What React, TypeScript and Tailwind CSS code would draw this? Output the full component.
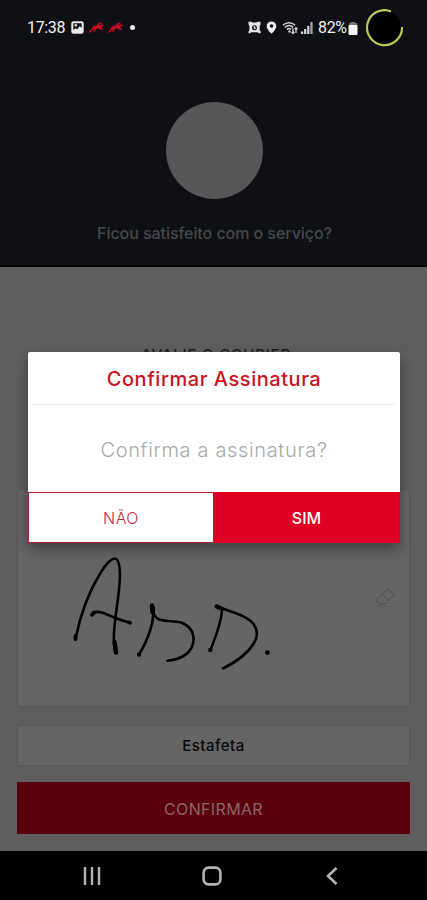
import type { ReactNode } from 'react'

function CourierIcon() {
  return (
    <svg width="15" height="12" viewBox="0 0 15 12" fill="none" stroke="#cb0a20" strokeLinecap="round" strokeLinejoin="round">
      <path d="M4.500 6.200L9 4.600l2 .8" strokeWidth="3.200" />
      <path d="M4.500 6L2.800 8 .9 9.900M6.500 6.500L5.200 9.200M10.500 6l2.600 1.400" strokeWidth="1.600" />
      <path d="M8.500 4l1.500-2.200 1.800-.5M11.500 3.600l2.300-.2" strokeWidth="1.600" />
    </svg>
  )
}

function StatusBar() {
  return (
    <div className="flex h-[55px] items-center justify-between pr-[23px] pl-[27px] text-[#f2f2f2]">
      <div className="flex items-center">
        <span className="w-[38px] font-[Roboto] text-[16px] tracking-[-0.35px] whitespace-nowrap">17:38</span>
        <svg className="ml-[6px]" width="13" height="13" viewBox="0 0 13 13">
          <rect x=".3" y=".3" width="12.400" height="12.400" rx="2.200" fill="#e9e9e9" />
          <path d="M2.300 2.300h8.400v4.500L8.600 5.200 6.200 8.400 4.700 7.300 2.300 9z" fill="#14161a" />
          <circle cx="4.800" cy="4.300" r="1.200" fill="#e9e9e9" />
          <path d="M2.500 10.200l2.200-1.700 1.500 1.200 2.400-3 2 1.800v2z" fill="#e9e9e9" />
        </svg>
        <span className="ml-[5px]"><CourierIcon /></span>
        <span className="ml-[4px]"><CourierIcon /></span>
        <span className="ml-[7px] size-[5px] rounded-full bg-[#ededed]" />
      </div>

      <div className="flex items-center">
        <svg width="13" height="13" viewBox="0 0 13 13">
          <path d="M.5.8h3l1 .8h4l1-.8h3v3l-.8 1v4.400l1 1.200v1.800h-1.900l-1-.9H3.200l-1 .9H.5v-1.800l.9-1.200V4.800l-.9-1z" fill="#e4e4e4" />
          <circle cx="6.500" cy="6.700" r="2.500" fill="#0f1115" />
          <path d="M6.300 4.900v2.300h1.900" fill="none" stroke="#e4e4e4" strokeWidth="1.200" />
        </svg>
        <svg className="ml-[5px]" width="11" height="13" viewBox="0 0 11 13">
          <path d="M5.500.4A4.800 4.800 0 0 0 .7 5.200C.7 8.500 5.500 12.600 5.500 12.600s4.800-4.100 4.800-7.400A4.800 4.800 0 0 0 5.500.4z" fill="#efefef" />
          <circle cx="5.500" cy="5" r="1.800" fill="#0e1014" />
        </svg>
        <svg className="ml-[5px]" width="17" height="14" viewBox="0 0 17 14" fill="none" stroke="#cfcfcf">
          <path d="M.8 4.200C4.500.8 9.500.8 13.200 4.200M2.800 6.400C5.400 4 8.600 4 11.200 6.400M4.900 8.400c1.200-1.100 3-1.100 4.200 0" strokeWidth="1.500" />
          <path d="M6.600 9.600l1.700 1.800" strokeWidth="2" />
          <path d="M11 7.200v5.200M9.600 11l1.400 1.500 1.300-1.500M14 12V6.800M12.800 8.200L14 6.700l1.500 1.500" strokeWidth="1.400" />
        </svg>
        <svg className="ml-[2px]" width="12" height="12" viewBox="0 0 12 12" fill="#d9d9d9">
          <path d="M0 9.600h2.200V12H0zM3.100 7h2.200v5H3.100zM6.200 4h2.200v8H6.200z" />
          <path d="M9.400 0h2.200v12H9.400z" fill="#a9a9a9" />
        </svg>
        <span className="ml-[5px] w-[29px] font-[Roboto] text-[16px] tracking-[-0.35px] whitespace-nowrap">82%</span>
        <svg className="mt-px ml-px" width="10" height="13" viewBox="0 0 10 13">
          <path d="M3 0h4v1H3zM1 1h8v3H1z" fill="#777" />
          <rect x=".5" y="3" width="9" height="10" rx="1" fill="#f5f5f5" />
        </svg>
        {/* camera cutout with the charge ring */}
        <svg className="ml-[8px]" width="38" height="38" viewBox="0 0 38 38">
          <circle cx="18.500" cy="19" r="17" fill="#000" />
          <path d="M25 2.400A17.500 17.500 0 1 0 36 18" fill="none" stroke="#b9c85a" strokeWidth="2.200" />
        </svg>
      </div>
    </div>
  )
}

function EraserIcon() {
  return (
    <svg width="22" height="22" viewBox="0 0 22 22" fill="none" stroke="#4d5150" strokeWidth="1">
      <path d="M2.500 12.500L14 2l6.500 6L10 17.300H5.800L2.500 14zM8.500 7l6 6" />
      <path d="M1 19.500h19" stroke="#595c5b" />
    </svg>
  )
}

function Signature() {
  return (
    <svg
      className="absolute top-[65px] left-[55px]"
      width="205"
      height="115"
      viewBox="73 555 205 115"
      fill="none"
      stroke="#020202"
      strokeWidth="2.600"
      strokeLinecap="round"
      strokeLinejoin="round"
    >
      <path d="M75.500 639C80 616 88 593 101 572C106 564 112 558 115 558.500C119 559 120 568 120 577C119 598 115 615 114 632C113.500 643 114 646 116 653" />
      <path d="M114.500 642L116 652.500" strokeWidth="4.500" />
      <path d="M75.500 636v3" strokeWidth="3.800" />
      <path d="M92 614.500C94 611 98 611.500 102 612.500C109 615 115 619 130 622.800" />
      <path d="M92 614.800L94 612.500M129 622.500l1 .3" strokeWidth="3.800" />
      <path d="M152.500 605.500C152 612 154 616 158 619C165 622 174 620.500 181 622.500C190 626 194 633 193.500 641C192 653 182 659 167.500 660.800" />
      <path d="M153.500 607C154 622 149 638 139 654.500" />
      <path d="M152 605.500L152.500 612" strokeWidth="4.500" />
      <path d="M217 606.500C231 612 246 615 253.500 624C258 630 257.500 637 254 643C247 655 236 662 223 668.500" />
      <path d="M222 610C221 625 215 638 210.500 650" />
      <path d="M216.800 606.500L220 608M210.300 650h.1M139 654.500h.1M267.300 652.500h.4" strokeWidth="4.400" />
    </svg>
  )
}

function Panel({ className, children }: { className: string; children: ReactNode }) {
  return <div className={`mx-[18px] bg-[#656565] shadow-[0_0_2px_1px_rgba(0,0,0,0.05)] ${className}`}>{children}</div>
}

function ConfirmDialog() {
  return (
    <div className="absolute top-[352px] left-[28px] flex h-[191px] w-[372px] flex-col rounded-t-[2px] bg-white shadow-[0_6px_14px_rgba(0,0,0,0.38)]">
      <h2 className="mx-1 flex h-[53px] items-center justify-center border-b border-[#eeeeee] pt-px text-[20px] font-medium tracking-[0.55px] text-[#cb1322]">
        Confirmar Assinatura
      </h2>
      <p className="flex h-[87px] items-center justify-center pt-[2px] text-[20px] font-light tracking-[0.65px] text-[#a9a9a9]">
        Confirma a assinatura?
      </p>
      <div className="flex h-[51px]">
        <button className="w-[185px] border border-r-0 border-[#b51d31] text-[16px] font-light tracking-[0.4px] text-[#c4293d]">NÃO</button>
        <button className="w-[187px] bg-[#df0024] text-[16px] font-medium text-white">SIM</button>
      </div>
    </div>
  )
}

function NavBar() {
  return (
    <nav className="flex h-[49px] items-center bg-black text-[#b5b5b5]">
      <svg className="ml-[83px]" width="18" height="18" viewBox="0 0 18 18" fill="none" stroke="currentColor" strokeWidth="2.400">
        <path d="M2 0v18M9 0v18M16 0v18" />
      </svg>
      <svg className="ml-[101px]" width="20" height="20" viewBox="0 0 20 20" fill="none" stroke="currentColor" strokeWidth="2.600">
        <rect x="1.600" y="1.600" width="16.800" height="16.800" rx="5" />
      </svg>
      <svg className="ml-[104px]" width="12" height="18" viewBox="0 0 12 18" fill="none" stroke="currentColor" strokeWidth="2.600">
        <path d="M10.500 1L2 9l8.500 8" />
      </svg>
    </nav>
  )
}

export default function App() {
  return (
    <div className="relative flex h-[900px] w-[427px] flex-col overflow-hidden bg-[#5e5e5e] font-[Inter,sans-serif]">
      <header className="h-[267px] border-b-2 border-[#040506] bg-[#0e1014]">
        <StatusBar />
        <div className="mt-[47px] ml-[166px] size-[97px] rounded-full bg-[#575757]" />
        <p className="mt-[22px] pl-[2px] text-center text-[16px] leading-6 font-medium tracking-[-0.06px] text-[#47484a]">
          Ficou satisfeito com o serviço?
        </p>
      </header>

      <main className="flex flex-1 flex-col">
        <h1 className="mt-[76px] h-[147px] pl-[5px] text-center text-[15px] leading-6 font-medium tracking-[0.8px] text-[#1c1c1c]">
          AVALIE O COURIER
        </h1>
        <Panel className="relative h-[216px] rounded-[3px]">
          <Signature />
          <div className="absolute top-[97px] right-[13px]">
            <EraserIcon />
          </div>
        </Panel>
        <Panel className="mt-[20px] flex h-[39px] items-center justify-center">
          <span className="pt-px text-[15px] font-medium tracking-[0.5px] text-[#080808]">Estafeta</span>
        </Panel>
        <button className="mx-[17px] mt-[17px] h-[52px] bg-[#59000c] pt-px text-[16px] tracking-[0.35px] text-[#8b6668]">
          CONFIRMAR
        </button>
      </main>

      <NavBar />
      <ConfirmDialog />
    </div>
  )
}
